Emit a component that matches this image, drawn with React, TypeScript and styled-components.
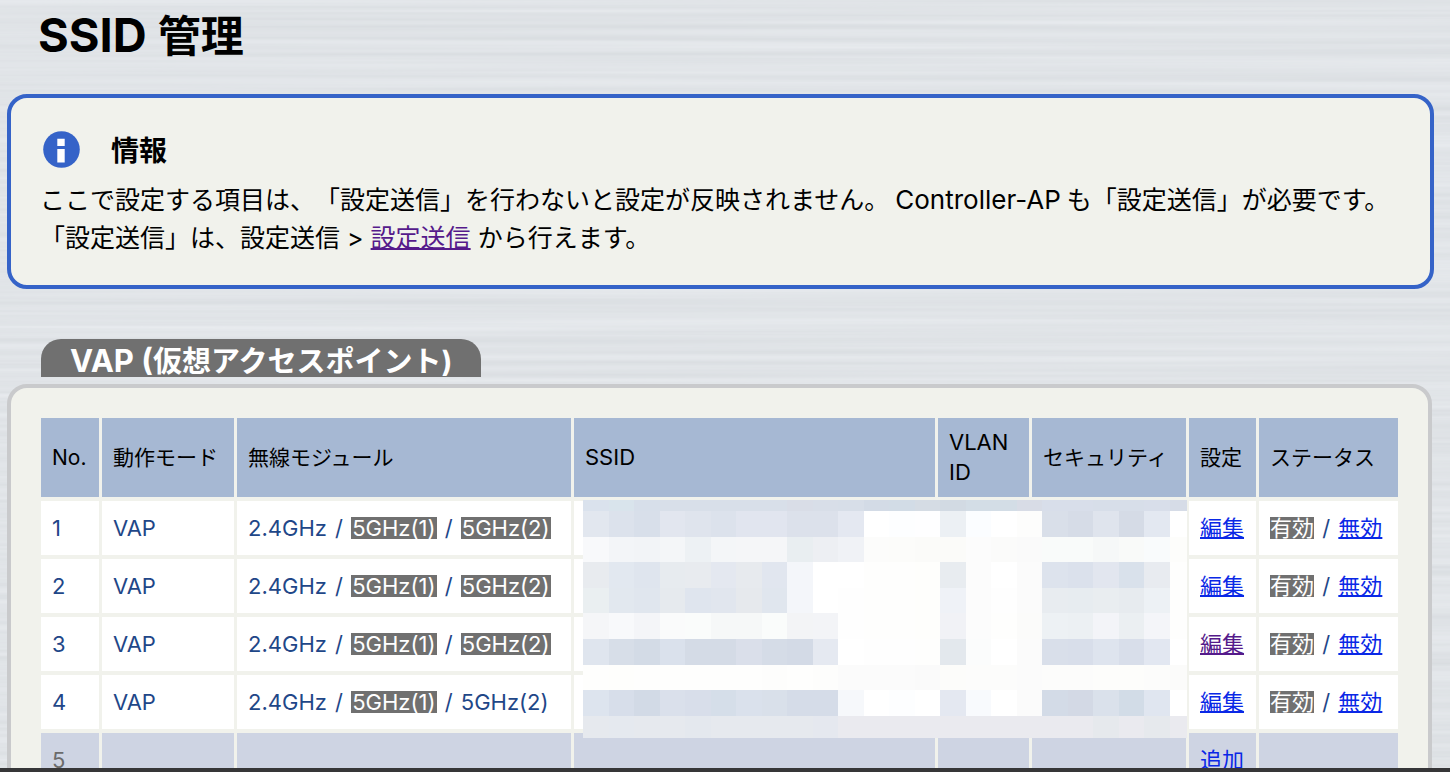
import React from "react";
import styled, { createGlobalStyle, css } from "styled-components";

const GlobalStyle = createGlobalStyle`
  * { box-sizing: border-box; }
  body {
    margin: 0;
    background: #dfe3e7;
    color: #000;
    font-family: Inter, "Noto Sans CJK JP", sans-serif;
    text-spacing-trim: space-all;
  }
`;

const Screen = styled.div`
  position: relative;
  display: flex;
  flex-direction: column;
  height: 100vh;
  overflow: hidden;
`;

const Texture = styled.svg`
  position: absolute;
  inset: 0;
  width: 100%;
  height: 100%;
`;

const Content = styled.main`
  position: relative;
  flex: 1;
  min-height: 0;
  overflow: hidden;
  padding: 6px 16px 0 7px;
`;

const WindowEdge = styled.footer`
  position: relative;
  height: 4px;
  background: #363638;
`;

/* Western words are set a little larger than the kana around them. */
const Latin = styled.span<{ $size: number; $gap?: number }>`
  margin: 0 ${(p) => p.$gap ?? 0}px;
  font-size: ${(p) => p.$size}px;
  line-height: 1;
`;

const Title = styled.h1`
  margin: 0 0 28px 31px;
  font-size: 43px;
  line-height: 60px;
  font-weight: 700;
`;

const InfoBox = styled.section`
  padding: 33px 29px 28px;
  border: 4px solid #3563c8;
  border-radius: 20px;
  background: #f1f2ec;
  font-size: 25px;
  line-height: 38px;
`;

const InfoHead = styled.div`
  display: flex;
  align-items: flex-start;
  gap: 31px;
  height: 40px;
  margin-bottom: 10px;
  padding-left: 3px;
`;

const InfoTitle = styled.h2`
  margin: 0;
  font-size: 28px;
  line-height: 40px;
`;

const Text = styled.p`
  margin: 0;
`;

const Link = styled.a<{ $visited?: boolean }>`
  color: ${(p) => (p.$visited ? "#551a8b" : "#0a28e6")};
  text-decoration: underline;
  text-decoration-thickness: 2px;
`;

const Tab = styled.h2`
  width: fit-content;
  margin: 50px 0 7px 34px;
  padding: 4px 29px 0;
  height: 38px;
  border-radius: 20px 20px 0 0;
  background: #707070;
  color: #fff;
  font-size: 29px;
  line-height: 38px;
`;

const Panel = styled.section`
  margin-right: 2px;
  padding: 26px 27px 26px;
  border: 4px solid #c9cacc;
  border-radius: 20px;
  background: #f1f2ec;
`;

const TableWrap = styled.div`
  position: relative;
`;

const Table = styled.table`
  width: 100%;
  table-layout: fixed;
  border-collapse: separate;
  border-spacing: 3px 4px;
`;

const Col = styled.col<{ $w?: number }>`
  ${(p) => p.$w && css`width: ${p.$w}px;`}
`;

const Th = styled.th`
  height: 79px;
  padding: 0 11px;
  background: #a6b8d3;
  font-size: 21px;
  line-height: 30px;
  font-weight: 400;
  text-align: left;
`;

const Td = styled.td<{ $empty?: boolean }>`
  height: 54px;
  padding: 0 11px;
  background: ${(p) => (p.$empty ? "#ced4e3" : "#fff")};
  color: ${(p) => (p.$empty ? "#6b6b6b" : "#1f4788")};
  font-size: 22px;
  line-height: 30px;
  white-space: nowrap;
`;

const Selected = styled.span<{ $pad?: number }>`
  display: inline-block;
  padding: 0 ${(p) => p.$pad ?? 0}px;
  background: #707070;
  color: #fff;
  line-height: 22px;
`;

const Slash = styled.span`
  margin: 0 2px;
`;

const Mosaic = styled.svg`
  position: absolute;
  top: 86px;
  left: 545px;
  width: calc(100% - 759px);
  height: 238px;
`;

const rows = [
  { no: 1, second: true, visited: false },
  { no: 2, second: true, visited: false },
  { no: 3, second: true, visited: true },
  { no: 4, second: false, visited: false },
];

const widths = [58, 132, 334, undefined, 91, 154, 67, 139];

const tileEdges = [0, 11, 37, 62, 88, 113, 139, 165, 190, 216, 238];
const tiles = [
  "dae2ed d9e4ec d7dfea d8dfe9 d8dfe9 d8dfe9 d8dfe9 d8dfe9 d9dde7 d8dee8 d7dee8 d3dbe6 d2dce6 d5dce4 d2dae3 d3dde6 d3dde6 d8dce6 d8deea d8deea d7dee9 d7dee9 d8deea d6dce7",
  "e2e7ef dce2ec d8dfea e2e6ef dfe4ed dce2ec e1e5ef e1e5ef dce1eb dce1eb e4e8f1 ffffff fdfeff fefeff ecf0f4 fbfdff ffffff fdfdfc d9dfe9 d6dce7 dfe4ed d5dbe6 e3e8f1 ffffff",
  "f8f9fb f3f5f8 f2f4f7 f4f6f8 edf1f4 f4f6f8 f5f6f8 f5f6f8 e9eef1 edeff3 f0f2f6 fcfcfb fcfcfa fbfbf9 fbfbf9 fcfcfc fbfbfa fafafa f9fbfa f9fbfa f6f8f8 f9faf9 f9fbfc fdfdfb",
  "e8ebef e2e8f0 dfe5ee e7ebef e8ebef e4e8f0 e7eaee e1e6ef f4f6fa ffffff ffffff fefefd fefefd fefefc e8ecf0 fcfcfc ffffff fbfbfb dde3ed dbe1ec e2e6ef d9e1eb e8ebf0 fefefd",
  "eaeff1 e2e8ef e0e6ee e6eaee dfe5ee e1e6ee e6e9ed e0e6ee f4f6fa ffffff fefefe fefefd fefefd fefefc eff2f7 fcfcfc fefefe fbfbfb e8ecf0 e7ecf0 e9edf0 e7ebef edf1f5 fefefd",
  "f5f6f8 f8f9fb f4f5f8 fafbfb fafcfb f6f8f8 f6f8f8 fafcfb f3f4f6 f3f4f7 fefefe fefefd fefefd fefefc f1f2f6 fcfcfc fefefd fbfbfa edf1f4 ecf0f3 f3f4f8 ebeff2 f4f5f9 fefefd",
  "dfe5ee d7dee8 d3dbe6 dae1ec d4dbe6 d4dbe6 dadfea d5dce7 d3dae6 e5e9f1 ffffff fefefe fefefe fefefd e3e8ed fbfcfc ffffff fbfbfb d9dfea d8deea dee4ee d8deea e2e7f1 ffffff",
  "fefefd fefefc fefefd fefefd fefefd fefefd fefefd fdfdfc fefefd fdfdfc fbfbfb fbfbfb fbfbfb fafafa fcfcfa fcfcfb fcfcfb fbfbfb fcfcfb fcfcfb fdfdfb fdfdfb fcfcfb fbfbfa",
  "dde4ee d7deea d2dae6 dae0eb d8deea d5dee9 dae1ec d9e0ea d5dce8 d5dce8 f6f8fb ffffff fdfeff ffffff e4e8f1 f8fafd ffffff fbfbfb d3dbe7 d3d9e5 dae1eb d2dce7 e0e6f0 ffffff",
  "e6e9ee e5e9ef e6e9ee e6e9ee e4e8ee e6e9ee e6e9ee e6e9ee e6e9ee e5e8ef eaeaef eaeaef eaeaef eaeaef eaeaef eaeaef eaeaef eaeaef eaeaef eaeaef e6e9ed eaeaef e6e9ed eaeaef",
].map((line) => line.split(" "));

export default function App() {
  return (
    <Screen>
      <GlobalStyle />
      <Texture aria-hidden="true">
        <filter id="brushed" x="0" y="0" width="100%" height="100%" colorInterpolationFilters="sRGB">
          <feTurbulence type="fractalNoise" baseFrequency="0.001 0.16" numOctaves="3" seed="4" />
          <feColorMatrix values="0.08 0 0 0 0.84  0.075 0 0 0 0.856  0.075 0 0 0 0.87  0 0 0 0 1" />
        </filter>
        <rect width="100%" height="100%" filter="url(#brushed)" />
      </Texture>
      <Content>
        <Title>
          <Latin $size={47}>SSID </Latin>管理
        </Title>
        <InfoBox>
          <InfoHead>
            <svg width="37" height="37" viewBox="0 0 37 37" aria-hidden="true">
              <circle cx="18.5" cy="18.5" r="18.3" fill="#3563c8" />
              <path d="M14.300 7.700h7.400v7.300h-7.400zM14.300 18h7.400v13.500h-7.400z" fill="#fff" />
            </svg>
            <InfoTitle>情報</InfoTitle>
          </InfoHead>
          <Text>
            ここで設定する項目は、「設定送信」を行わないと設定が反映されません。
            <Latin $size={26} $gap={6}>Controller-AP</Latin>
            も「設定送信」が必要です。
          </Text>
          <Text>
            「設定送信」は、設定送信 &gt; <Link $visited href="#send">設定送信</Link> から行えます。
          </Text>
        </InfoBox>
        <Tab>
          <Latin $size={31}>VAP (</Latin>仮想アクセスポイント)
        </Tab>
        <Panel>
          <TableWrap>
            <Table>
              <colgroup>
                {widths.map((w, i) => (
                  <Col key={i} $w={w} />
                ))}
              </colgroup>
              <thead>
                <tr>
                  <Th>No.</Th>
                  <Th>動作モード</Th>
                  <Th>無線モジュール</Th>
                  <Th><Latin $size={22}>SSID</Latin></Th>
                  <Th><Latin $size={22}>VLAN ID</Latin></Th>
                  <Th>セキュリティ</Th>
                  <Th>設定</Th>
                  <Th>ステータス</Th>
                </tr>
              </thead>
              <tbody>
                {rows.map((r) => (
                  <tr key={r.no}>
                    <Td>{r.no}</Td>
                    <Td>VAP</Td>
                    <Td>
                      2.4GHz <Slash>/</Slash> <Selected $pad={1}>5GHz(1)</Selected>{" "}
                      <Slash>/</Slash>{" "}
                      {r.second ? <Selected $pad={1}>5GHz(2)</Selected> : "5GHz(2)"}
                    </Td>
                    <Td />
                    <Td />
                    <Td />
                    <Td>
                      <Link $visited={r.visited} href="#edit">編集</Link>
                    </Td>
                    <Td>
                      <Selected>有効</Selected> <Slash>/</Slash> <Link href="#disable">無効</Link>
                    </Td>
                  </tr>
                ))}
                <tr>
                  <Td $empty>5</Td>
                  <Td $empty />
                  <Td $empty />
                  <Td $empty />
                  <Td $empty />
                  <Td $empty />
                  <Td $empty>
                    <Link href="#add">追加</Link>
                  </Td>
                  <Td $empty />
                </tr>
              </tbody>
            </Table>
            <Mosaic
              viewBox="0 0 604 238"
              preserveAspectRatio="none"
              shapeRendering="crispEdges"
              aria-hidden="true"
            >
              {tiles.map((line, y) =>
                line.map((color, x) => (
                  <rect
                    key={`${x}-${y}`}
                    x={Math.round(x * 25.5)}
                    y={tileEdges[y]}
                    width={26}
                    height={tileEdges[y + 1] - tileEdges[y]}
                    fill={`#${color}`}
                  />
                ))
              )}
            </Mosaic>
          </TableWrap>
        </Panel>
      </Content>
      <WindowEdge />
    </Screen>
  );
}
